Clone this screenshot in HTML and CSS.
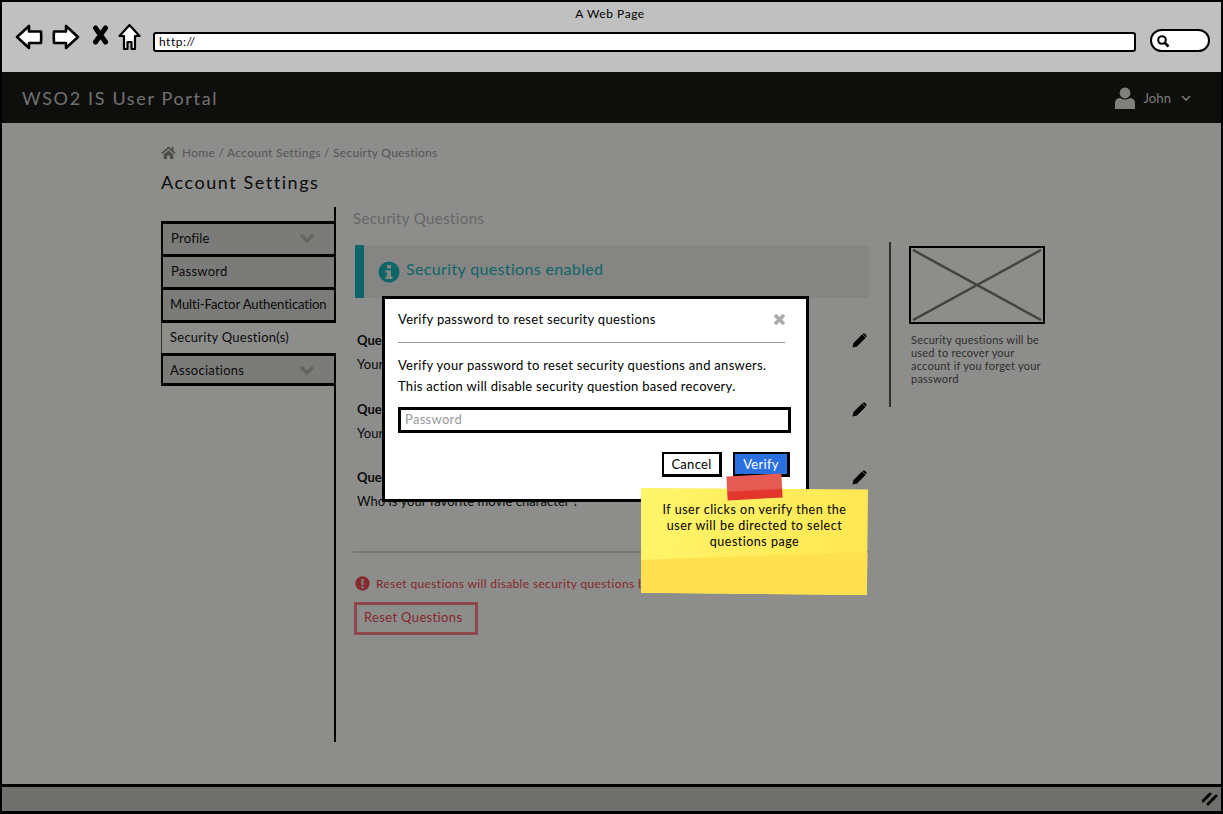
FILE: index.html
```html
<!DOCTYPE html>
<html lang="en">
<head>
    <meta charset="UTF-8">
    <meta name="viewport" content="width=device-width, initial-scale=1">
    <title>A Web Page</title>
    <link rel="stylesheet" href="styles.css">
</head>
<body>

<div class="window">

    <!-- browser chrome -->
    <div class="chrome">
        <div class="chrome-title">A Web Page</div>
        <div class="chrome-row">
            <svg class="nav-icon" width="28" height="26" viewBox="0 0 28 26"><path d="M2 13 L14 2 L14 7.5 L26 7.5 Q26.5 13 26 19 L14 19 L14 24 Z" fill="#fff" stroke="#000" stroke-width="2.6" stroke-linejoin="round"/></svg>
            <svg class="nav-icon nav-forward" width="28" height="26" viewBox="0 0 28 26"><path d="M26 13 L14 2 L14 7.5 L2 7.5 Q1.5 13 2 19 L14 19 L14 24 Z" fill="#fff" stroke="#000" stroke-width="2.6" stroke-linejoin="round"/></svg>
            <svg class="nav-icon nav-stop" width="17" height="20" viewBox="0 0 17 20"><path d="M3.5 3 L13.5 17 M13.5 3 L3.5 17" fill="none" stroke="#000" stroke-width="5" stroke-linecap="round"/></svg>
            <svg class="nav-icon nav-home" width="23" height="28" viewBox="0 0 23 28"><path d="M11.5 2 L21.5 13 L17 13 L17 26 L13.5 26 L13.5 19 L9.5 19 L9.5 26 L6 26 L6 13 L1.5 13 Z" fill="#fff" stroke="#000" stroke-width="2.2" stroke-linejoin="round"/></svg>
            <div class="address">http://</div>
            <div class="search">
                <svg width="14" height="14" viewBox="0 0 14 14"><circle cx="6" cy="6" r="3.8" fill="none" stroke="#000" stroke-width="2"/><path d="M9 9 L12.5 12.5" stroke="#000" stroke-width="2.6"/></svg>
            </div>
        </div>
    </div>

    <!-- app header -->
    <div class="topbar">
        <div class="brand">WSO2 IS User Portal</div>
        <div class="user">
            <svg width="20" height="22" viewBox="0 0 20 22"><circle cx="10" cy="6" r="5.4" fill="#e8e8e8"/><path d="M0 22 L0 16 Q0 11.5 5 11 Q10 14 15 11 Q20 11.5 20 16 L20 22 Z" fill="#e8e8e8"/></svg>
            <span class="user-name">John</span>
            <svg width="10" height="6" viewBox="0 0 10 6"><path d="M1 1 L5 5 L9 1" fill="none" stroke="#ddd" stroke-width="1.6"/></svg>
        </div>
    </div>

    <!-- page -->
    <div class="page">
        <div class="crumbs">
            <svg width="15" height="13" viewBox="0 0 15 13"><path d="M7.5 0.5 L10.5 3 L10.5 1 L12.5 1 L12.5 4.8 L15 7 L13.6 8 L7.5 2.8 L1.4 8 L0 7 Z M2.6 8.4 L7.5 4.2 L12.4 8.4 L12.4 13 L9 13 L9 9.5 L6 9.5 L6 13 L2.6 13 Z" fill="#8c8c8c"/></svg>
            <span>Home / Account Settings / Secuirty Questions</span>
        </div>
        <h1 class="page-title">Account Settings</h1>

        <div class="columns">
            <div class="sidebar">
                <ul class="menu">
                    <li class="menu-item">Profile <svg class="chev" width="16" height="10" viewBox="0 0 16 10"><path d="M2 2 L8 8 L14 2" fill="none" stroke="#b5b5b5" stroke-width="3.4"/></svg></li>
                    <li class="menu-item">Password</li>
                    <li class="menu-item menu-item-long">Multi-Factor Authentication</li>
                    <li class="menu-item active">Security Question(s)</li>
                    <li class="menu-item">Associations <svg class="chev" width="16" height="10" viewBox="0 0 16 10"><path d="M2 2 L8 8 L14 2" fill="none" stroke="#b5b5b5" stroke-width="3.4"/></svg></li>
                </ul>
            </div>

            <div class="main">
                <h2 class="section-title">Security Questions</h2>
                <div class="alert">
                    <svg width="22" height="22" viewBox="0 0 22 22"><circle cx="11" cy="11" r="10.5" fill="#1ab8bf"/><rect x="9" y="4" width="4" height="3.4" fill="#f0f0f0"/><path d="M7.5 9.2 H13 V15.6 H14.5 V18 H7.5 V15.6 H9 V11.4 H7.5 Z" fill="#f0f0f0"/></svg>
                    <span class="alert-text">Security questions enabled</span>
                </div>

                <div class="question">
                    <div class="q-text">
                        <div class="q-label">Question 1</div>
                        <div class="q-answer">Your</div>
                    </div>
                    <svg class="pencil" width="15" height="15" viewBox="0 0 15 15"><path d="M0.5 14.5 L1.5 10 L10 1.5 L13.5 5 L5 13.5 Z M11 0.8 Q12 0 13 0.8 L14.2 2 Q15 3 14.2 4 L13.7 4.5 L10.5 1.3 Z" fill="#000"/></svg>
                </div>
                <div class="question">
                    <div class="q-text">
                        <div class="q-label">Question 2</div>
                        <div class="q-answer">Your</div>
                    </div>
                    <svg class="pencil" width="15" height="15" viewBox="0 0 15 15"><path d="M0.5 14.5 L1.5 10 L10 1.5 L13.5 5 L5 13.5 Z M11 0.8 Q12 0 13 0.8 L14.2 2 Q15 3 14.2 4 L13.7 4.5 L10.5 1.3 Z" fill="#000"/></svg>
                </div>
                <div class="question">
                    <div class="q-text">
                        <div class="q-label">Question 3</div>
                        <div class="q-answer">Who is your favorite movie character ?</div>
                    </div>
                    <svg class="pencil" width="15" height="15" viewBox="0 0 15 15"><path d="M0.5 14.5 L1.5 10 L10 1.5 L13.5 5 L5 13.5 Z M11 0.8 Q12 0 13 0.8 L14.2 2 Q15 3 14.2 4 L13.7 4.5 L10.5 1.3 Z" fill="#000"/></svg>
                </div>

                <hr class="divider">

                <div class="warning">
                    <svg width="15" height="15" viewBox="0 0 15 15"><circle cx="7.5" cy="7.5" r="7.2" fill="#f04a50"/><rect x="6.2" y="3" width="2.6" height="6" fill="#ddd"/><rect x="6.2" y="10" width="2.6" height="2.4" fill="#ddd"/></svg>
                    <span>Reset questions will disable security questions based</span>
                </div>
                <button class="reset-btn">Reset Questions</button>
            </div>

            <div class="aside">
                <div class="placeholder">
                    <svg width="130" height="72" viewBox="0 0 130 72" preserveAspectRatio="none"><path d="M1 1 L129 71 M129 1 L1 71" stroke="#777" stroke-width="2.5"/></svg>
                </div>
                <p class="aside-text">Security questions will be used to recover your account if you forget your password</p>
            </div>
        </div>
    </div>

    <div class="statusbar">
        <svg width="16" height="14" viewBox="0 0 16 14"><path d="M1 9 L8 2 M6 12 L14 4" stroke="#000" stroke-width="3" stroke-linecap="round"/></svg>
    </div>

    <!-- dims everything below the browser chrome -->
    <div class="overlay"></div>

    <div class="modal">
        <div class="modal-head">
            <span>Verify password to reset security questions</span>
            <svg width="13" height="13" viewBox="0 0 13 13"><path d="M2 2 L11 11 M11 2 L2 11" stroke="#aaa" stroke-width="3.6"/></svg>
        </div>
        <hr class="modal-rule">
        <p class="modal-copy">Verify your password to reset security questions and answers.<br>This action will disable security question based recovery.</p>
        <input class="modal-input" type="text" placeholder="Password">
        <div class="modal-actions">
            <button class="btn">Cancel</button>
            <button class="btn btn-primary">Verify</button>
        </div>
    </div>

    <div class="sticky">
        <div class="tape"></div>
        <p>If user clicks on verify then the user will be directed to select questions page</p>
    </div>
</div>

</body>
</html>
```

FILE: styles.css
```css
* {
    box-sizing: border-box;
}

body {
    margin: 0;
    font-family: "Lato", sans-serif;
    color: #000;
    background-color: #fff;
    overflow: hidden;
}

.window {
    position: relative;
    width: 1223px;
    height: 814px;
    display: flex;
    flex-direction: column;
    border: 2px solid #000;
    border-bottom-width: 3px;
    overflow: hidden;
}

/* browser chrome */
.chrome {
    height: 70px;
    background-color: #c0c0c0;
    flex-shrink: 0;
}

.chrome-title {
    font-size: 12px;
    letter-spacing: 0.55px;
    line-height: 14px;
    padding-top: 5px;
    text-align: center;
    margin-left: -3px;
}

.chrome-row {
    display: flex;
    align-items: center;
    padding: 0 11px 0 13px;
    height: 32px;
}

.nav-forward {
    margin-left: 9px;
}

.nav-stop {
    margin: -4px 0 0 12px;
}

.nav-home {
    margin-left: 9px;
}

.address {
    flex: 1;
    height: 20px;
    margin-left: 12px;
    margin-top: 9px;
    padding-left: 4px;
    font-size: 12px;
    line-height: 16px;
    letter-spacing: 0.5px;
    background-color: #fff;
    border: 2px solid #000;
    border-radius: 3px;
}

.search {
    width: 60px;
    height: 23px;
    margin-left: 14px;
    margin-top: 7px;
    padding: 3px 0 0 4px;
    background-color: #fff;
    border: 2px solid #000;
    border-radius: 12px;
}

.search svg {
    display: block;
}

/* app header */
.topbar {
    height: 51px;
    flex-shrink: 0;
    background-color: #181818;
    color: #ccc;
    display: flex;
    align-items: center;
    justify-content: space-between;
    padding: 0 30px 0 20px;
}

.brand {
    font-size: 18px;
    letter-spacing: 1.65px;
}

.user {
    display: flex;
    align-items: center;
}

.user-name {
    font-size: 13px;
    letter-spacing: 0.1px;
    color: #ddd;
    margin: 0 10px 0 8px;
}

/* page */
.page {
    flex: 1;
    background-color: #fff;
    padding: 21px 0 0 159px;
    min-height: 0;
}

.crumbs {
    display: flex;
    align-items: center;
    gap: 6px;
    height: 16px;
    font-size: 12px;
    letter-spacing: 0.28px;
    color: #999;
}

.page-title {
    margin: 10px 0 0;
    font-size: 18px;
    font-weight: normal;
    line-height: 24px;
    letter-spacing: 1.55px;
    color: #111;
}

.columns {
    display: flex;
    margin-top: 13px;
}

.sidebar {
    width: 175px;
    height: 535px;
    flex-shrink: 0;
    border-right: 2px solid #000;
    padding-top: 14px;
}

.menu {
    list-style: none;
    margin: 0 -2px 0 0;
    padding: 0;
}

.menu-item {
    height: 33px;
    padding: 0 19px 2px 8px;
    font-size: 13px;
    letter-spacing: 0.25px;
    background-color: #dedede;
    border: 2px solid #000;
    border-top-width: 3px;
    border-bottom: none;
    color: #111;
    display: flex;
    align-items: center;
    justify-content: space-between;
    white-space: nowrap;
}

.menu-item:last-child {
    border-bottom: 3px solid #000;
    padding-bottom: 0;
    padding-left: 7px;
}

.menu-item-long {
    letter-spacing: -0.05px;
    padding-left: 7px;
}

.menu-item.active {
    background-color: #fff;
    border-right: none;
    border-left: 1px solid #555;
    padding-left: 8px;
}

.main {
    width: 516px;
    margin-left: 17px;
    flex-shrink: 0;
}

.section-title {
    margin: 0;
    font-size: 15px;
    font-weight: normal;
    line-height: 22px;
    letter-spacing: 0.4px;
    color: #bbb;
}

.alert {
    display: flex;
    align-items: center;
    height: 53px;
    margin: 16px 0 0 2px;
    padding-left: 14px;
    gap: 6px;
    background-color: #f0f0f0;
    border-left: 9px solid #1ab8bf;
    color: #1ab8bf;
    font-size: 16px;
    letter-spacing: 0.35px;
}

.alert-text {
    margin-bottom: 7px;
}

.question {
    display: flex;
    justify-content: space-between;
    align-items: flex-start;
    height: 68.5px;
    padding: 0 2px 0 4px;
    font-size: 13px;
    letter-spacing: 0.05px;
}

.alert + .question {
    margin-top: 32px;
}

.q-label {
    font-weight: bold;
    line-height: 20px;
    color: #111;
}

.q-answer {
    line-height: 28px;
    color: #111;
}

.pencil {
    margin-top: 3px;
}

.divider {
    border: none;
    height: 2px;
    background-color: #d4d4d4;
    margin: 15px 0 0 0;
}

.warning {
    display: flex;
    align-items: center;
    gap: 6px;
    margin: 23px 0 0 2px;
    height: 16px;
    font-size: 12px;
    letter-spacing: 0.35px;
    color: #f04a50;
    white-space: nowrap;
}

.reset-btn {
    display: block;
    width: 124px;
    height: 33px;
    margin: 10px 0 0 1px;
    padding: 0 0 2px 7px;
    text-align: left;
    font-family: inherit;
    font-size: 13px;
    letter-spacing: 0.35px;
    color: #f04a50;
    background-color: #fff;
    border: 3px solid #ff8288;
}

.aside {
    margin: 35px 0 0 20px;
    padding-left: 18px;
    width: 176px;
    height: 165px;
    border-left: 2px solid #555;
    flex-shrink: 0;
}

.placeholder {
    width: 136px;
    height: 78px;
    margin-top: 4px;
    border: 2px solid #000;
    background-color: #fff;
}

.placeholder svg {
    display: block;
    margin: 1px;
}

.aside-text {
    margin: 9px 0 0 2px;
    width: 134px;
    font-size: 11px;
    line-height: 13px;
    letter-spacing: 0.22px;
    color: #555;
}

.statusbar {
    height: 27px;
    flex-shrink: 0;
    background-color: #c8c8c8;
    border-top: 3px solid #000;
    display: flex;
    justify-content: flex-end;
    align-items: center;
    padding-right: 3px;
}

/* modal layer */
.overlay {
    position: absolute;
    left: -2px;
    right: -2px;
    top: 70px;
    bottom: -3px;
    background-color: rgba(2, 2, 0, 0.45);
}

.modal {
    position: absolute;
    left: 380px;
    top: 294px;
    width: 427px;
    height: 206px;
    padding: 10px 14px 0 13px;
    background-color: #fff;
    border: 3px solid #000;
}

.modal-head {
    display: flex;
    justify-content: space-between;
    align-items: center;
    height: 20px;
    font-size: 13px;
    letter-spacing: 0.3px;
    padding-right: 6px;
}

.modal-rule {
    border: none;
    height: 1px;
    width: 387px;
    background-color: #999;
    margin: 13px 0 0 0;
}

.modal-copy {
    margin: 12px 0 0 0;
    font-size: 13px;
    line-height: 21px;
    letter-spacing: 0.29px;
}

.modal-input {
    display: block;
    width: 393px;
    height: 26px;
    margin-top: 10px;
    padding: 0 4px 2px;
    font-family: inherit;
    font-size: 13px;
    letter-spacing: 0.3px;
    border: 3px solid #000;
    background-color: #fff;
}

.modal-input::placeholder {
    color: #999;
}

.modal-actions {
    display: flex;
    justify-content: flex-end;
    gap: 11px;
    margin-top: 19px;
    width: 392px;
}

.btn {
    height: 25px;
    width: 60px;
    padding: 0;
    font-family: inherit;
    font-size: 13px;
    letter-spacing: 0.3px;
    background-color: #fff;
    color: #000;
    border: 2px solid #000;
    border-right-width: 3px;
    border-bottom-width: 3px;
}

.btn-primary {
    width: 57px;
    background-color: #2a70e0;
    color: #fff;
}

/* sticky note with tape */
.sticky {
    position: absolute;
    left: 639px;
    top: 486px;
    width: 227px;
    height: 107px;
    padding: 14px 16px 0;
    font-size: 12.5px;
    line-height: 16px;
    letter-spacing: 0.5px;
    text-align: center;
    color: #000;
}

.sticky::before {
    content: "";
    position: absolute;
    inset: 0;
    background: linear-gradient(178deg, transparent 62%, #ffe04e 63%), linear-gradient(100deg, #fff56a, #ffe650);
    clip-path: polygon(0 0, 100% 1.5%, 99.5% 100%, 0 98%);
}

.sticky p {
    position: relative;
    margin: 0;
}

.tape {
    position: absolute;
    z-index: 1;
    left: 86px;
    top: -13px;
    width: 55px;
    height: 24px;
    background: linear-gradient(180deg, #e55a52 0%, #e55a52 60%, #e2362c 68%, #e2362c 100%);
    transform: rotate(-3deg);
}
```
